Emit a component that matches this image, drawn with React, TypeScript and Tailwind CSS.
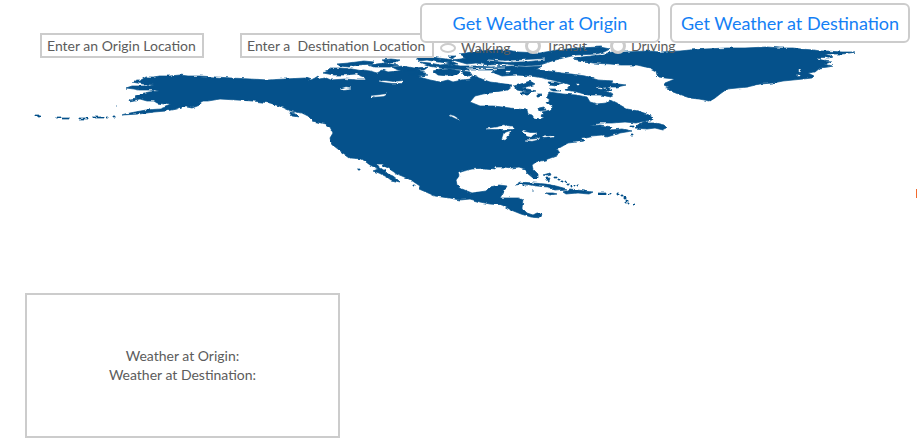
const LAND = [
  // Alaska, the Canadian coast and the United States down to Panama, back up the Atlantic side
  "M132 82L137 80L141 80L146 77L153 77L160 76L170 76L180 75L188 76L200 76L215 77L232 78L250 79L268 80L285 79L305 78L311 80L315 78L318 76L320 79L326 78L331 80L345 79L357 80L366 80L364 77L358 75L357 72L362 70L370 71L377 73L383 70L388 72L398 71L407 70L415 70L425 72L424 75L419 77L430 80L440 82L448 80L453 82L462 80L470 79L474 76L479 78L490 82L505 84L513 85L507 90L495 92L483 94L475 96L470 102L480 106L494 106L510 108L527 110L528 114L532 115L534 118L539 119L543 118L541 115L544 114L542 112L550 110L553 107L549 105L547 102L550 100L546 97L549 92L563 94L576 95L587 97L590 102L597 104L605 103L610 100L620 105L627 109L638 111L650 115L653 120L645 121L636 123L625 122L612 123L600 123L590 126L600 125L612 127L610 130L622 129L632 131L620 133L607 137L602 135L590 136L582 138L585 141L576 142L568 143L561 147L557 149L560 153L556 156L545 160L536 162L532 165L533 169L538 174L538 178L533 178L527 173L525 169L519 167L511 168L504 167L496 167L495 169L485 168L473 169L464 171L458 173L459 176L456 180L457 185L462 189L472 193L486 191L490 187L499 185L507 186L504 191L500 198L510 198L519 198L523 200L522 208L527 213L533 215L537 213L542 213L541 218L531 217L521 214L511 210L502 205L490 204L480 202L470 199L460 200L449 198L435 196L426 192L419 189L420 186L411 180L402 176L397 174L388 168L384 166L383 164L377 164L379 167L385 171L388 174L393 176L398 180L400 182L391 180L387 177L379 173L373 171L378 169L370 165L362 159L350 158L343 153L334 146L331 142L330 138L333 133L330 127L325 124L313 121L308 116L302 113L291 111L282 107L270 103L253 101L237 100L220 99L208 101L203 101L196 105L190 106L183 106L176 109L166 111L154 112L139 114L122 115L130 113L146 110L160 109L171 105L157 103L154 101L147 101L140 99L129 101L130 99L137 98L135 96L140 94L149 92L159 91L155 90L145 90L139 90L134 89L126 88L132 86L148 86L154 85L143 84Z",
  "M187 107L192 104L201 103L200 105L192 108Z M289 112L295 113L299 117L292 116Z",
  // Aleutians and Pacific islets
  "M35 115h4v1h-4z M38 116h3v1h-3z M57 117h4v1h-4z M62 118h7v1h-7z M79 118h9v1h-9z M92 117h11v1h-11z M106 117h2v1h-2z M113 116h2v1h-2z M115 105h1v1h-1z M358 169h2v1h-2z M413 185h2v1h-2z",
  // Arctic archipelago
  "M323 73L328 71L330 68L340 68L352 69L363 71L356 74L344 75L334 75Z",
  "M337 64L349 63L364 61L374 62L372 64L358 65L349 67L340 66Z",
  "M368 65L385 63L398 65L390 67L374 67Z M381 60L391 59L400 60L396 62L386 62Z",
  "M392 67L404 66L414 68L428 67L424 70L409 71L398 70Z",
  "M416 57L424 56L438 58L446 59L455 60L450 63L438 62L427 60L419 61Z",
  "M419 62L430 63L440 65L450 64L460 66L475 66L491 67L512 66L526 67L542 66L537 69L520 70L505 70L487 70L470 70L454 69L441 68L429 66Z",
  "M433 71L440 69L450 69L461 71L458 74L448 76L438 75Z M462 71L470 72L472 75L466 77L463 74Z",
  "M460 54L472 52L490 50L507 50L518 52L540 53L557 50L577 48L600 47L610 49L604 52L596 54L576 55L563 58L552 61L540 65L525 66L506 64L488 65L476 63L467 64L453 60L466 58Z",
  "M443 62L451 61L458 64L450 64Z M448 56L456 56L453 58Z M408 74L420 73L428 75L418 76Z",
  // Baffin Island
  "M492 72L500 69L519 69L535 69L548 71L561 73L572 74L585 76L598 80L613 81L610 83L626 85L617 87L607 87L612 90L605 91L613 94L611 97L600 95L588 95L577 92L566 90L570 85L561 82L551 80L543 78L531 76L516 75L502 76Z",
  "M514 86L524 83L530 81L535 84L529 86L523 88L536 91L527 92L517 90Z M520 93L531 92L528 95L522 95Z M537 95L542 95L540 97L537 97Z M539 108L544 107L546 110L540 111Z M548 82L556 82L563 84L556 86L550 85Z M549 89L555 89L561 91L553 91Z",
  // Greenland
  "M573 59L582 57L600 55L612 52L625 52L648 51L660 52L680 51L690 50L705 49L727 48L745 48L767 47L780 48L793 48L801 49L813 50L819 51L827 51L842 52L855 52L842 54L826 54L833 57L828 58L822 60L832 61L828 63L824 64L833 66L828 67L820 68L815 72L808 73L814 76L812 78L803 79L793 80L783 81L773 83L760 84L747 87L737 88L727 89L720 94L715 98L710 101L699 99L690 98L681 95L673 92L670 89L664 86L665 83L675 79L665 78L659 77L657 75L656 71L650 68L637 65L621 65L610 64L593 63Z",
  // Newfoundland and the Gulf of St Lawrence
  "M635 128L640 124L645 121L648 123L655 123L664 125L667 128L663 130L655 128L647 129Z M631 126h3v1h-3z M631 135h2v1h-2z",
  // Caribbean
  "M515 185L520 182L533 183L545 184L556 186L567 189L555 190L548 187L536 186L525 184Z M563 192L570 189L585 191L593 192L589 194L577 193L566 194Z M546 193L553 193L557 194L550 195Z M598 193h8v1h-8z M609 193h2v1h-2z M523 185h4v1h-4z M532 190h1v1h-1z",
  "M543 175L550 173L551 175L547 176Z M546 178L550 178L549 181L546 180Z M555 177h2v1h-2z M558 179h2v1h-2z M561 181h2v1h-2z M565 181h1v1h-1z M567 183h2v2h-2z M571 186h1v1h-1z M574 185h1v1h-1z M577 185h1v1h-1z M617 193h2v1h-2z M621 195h2v1h-2z M624 197h2v2h-2z M626 200h1v3h-1z M628 203h1v1h-1z M634 204h1v1h-1z",
];

const WATER = [
  // Great Lakes and the large northern lakes
  "M486 129L498 127L505 125L508 127L514 128L514 129L505 129L495 129Z M502 139L504 133L511 131L509 134L507 138L505 140Z M522 131L530 133L537 133L533 135L531 137L527 136Z M525 140L537 139L540 139L532 141Z M542 137L554 136L554 137L544 138Z",
  "M449 115L454 116L460 120L455 118Z M371 96L380 95L387 94L384 96L372 97Z M340 89L346 87L351 88L345 89Z M378 81L386 81L393 82L403 81L403 83L392 83L384 82Z",
  // Polar channels and fjord cuts
  "M488 60L505 61L526 60L545 59L530 61L507 62Z M467 68L484 68L505 68L484 69Z M506 71h4v1h-4z M577 84h2v1h-2z M596 88L606 88L601 89Z M796 75h4v1h-4z M799 70L801 71L799 72Z M817 58L827 58L824 60Z",
];

function NorthAmericaMap() {
  return (
    <svg
      className="h-[222px] w-[917px] max-w-none"
      viewBox="0 0 917 222"
      role="img"
      aria-label="Map of North America"
    >
      <defs>
        {/* Breaks the straight segments into a slightly uneven coastline */}
        <filter
          id="coast"
          x="0"
          y="0"
          width="917"
          height="222"
          filterUnits="userSpaceOnUse"
          colorInterpolationFilters="sRGB"
        >
          <feTurbulence type="fractalNoise" baseFrequency="0.14 0.25" numOctaves="2" seed="4" result="noise" />
          <feDisplacementMap in="SourceGraphic" in2="noise" scale="3" xChannelSelector="R" yChannelSelector="G" />
        </filter>
      </defs>
      <g filter="url(#coast)">
        <path d={LAND.join(" ")} fill="#05518b" stroke="#05518b" strokeWidth="0.7" fillRule="nonzero" />
        <path d={WATER.join(" ")} fill="#ffffff" stroke="#ffffff" strokeWidth="0.4" />
      </g>
    </svg>
  );
}

function WeatherButton({ children }: { children: string }) {
  return (
    <button
      type="button"
      className="h-10 w-60 rounded-md border-2 border-[#cccccc] bg-white text-lg leading-6 whitespace-nowrap text-[#1480f5]"
    >
      {children}
    </button>
  );
}

const MODES = [
  { name: "Walking", dot: "h-[10px] border-2", box: "pt-[5px]" },
  { name: "Transit", dot: "h-4 border-3", box: "pt-[3px]" },
  { name: "Driving", dot: "h-4 border-3", box: "pt-[3px]" },
];

export default function App() {
  return (
    <main className="overflow-hidden bg-white font-[Lato,sans-serif] text-sm text-[#5c5c5c]">
      <div className="grid">
        <div className="[grid-area:1/1]">
          <NorthAmericaMap />
        </div>

        <form className="relative flex items-start pt-[33px] pl-10 [grid-area:1/1]">
          <input
            aria-label="Origin location"
            defaultValue="Enter an Origin Location"
            className="mr-9 h-[25px] w-[164px] shrink-0 border-2 border-[#cccccc] bg-white px-[5px]"
          />
          <input
            aria-label="Destination location"
            defaultValue="Enter a  Destination Location"
            className="mr-[6px] h-[25px] w-[194px] shrink-0 border-2 border-[#cccccc] bg-white px-[5px]"
          />
          {MODES.map((mode) => (
            <label key={mode.name} className={`flex w-[85px] shrink-0 items-center gap-[5px] ${mode.box}`}>
              <input
                type="radio"
                name="mode"
                className={`w-4 shrink-0 appearance-none rounded-[50%] border-[#cccccc] bg-white ${mode.dot}`}
              />
              {mode.name}
            </label>
          ))}
        </form>

        {/* The two actions float above the form row */}
        <div className="relative flex gap-[10px] self-start justify-self-end pt-[3px] pr-[7px] [grid-area:1/1]">
          <WeatherButton>Get Weather at Origin</WeatherButton>
          <WeatherButton>Get Weather at Destination</WeatherButton>
        </div>

        <div className="relative mt-[189px] h-[9px] w-px self-start justify-self-end bg-[#f26a2e] [grid-area:1/1]" />
      </div>

      <section className="mt-[71px] mb-1 ml-[25px] flex h-[145px] w-[315px] flex-col items-center justify-center border-2 border-[#cccccc] pb-[2px] leading-[19px]">
        <p>Weather at Origin:</p>
        <p>Weather at Destination:</p>
      </section>
    </main>
  );
}
